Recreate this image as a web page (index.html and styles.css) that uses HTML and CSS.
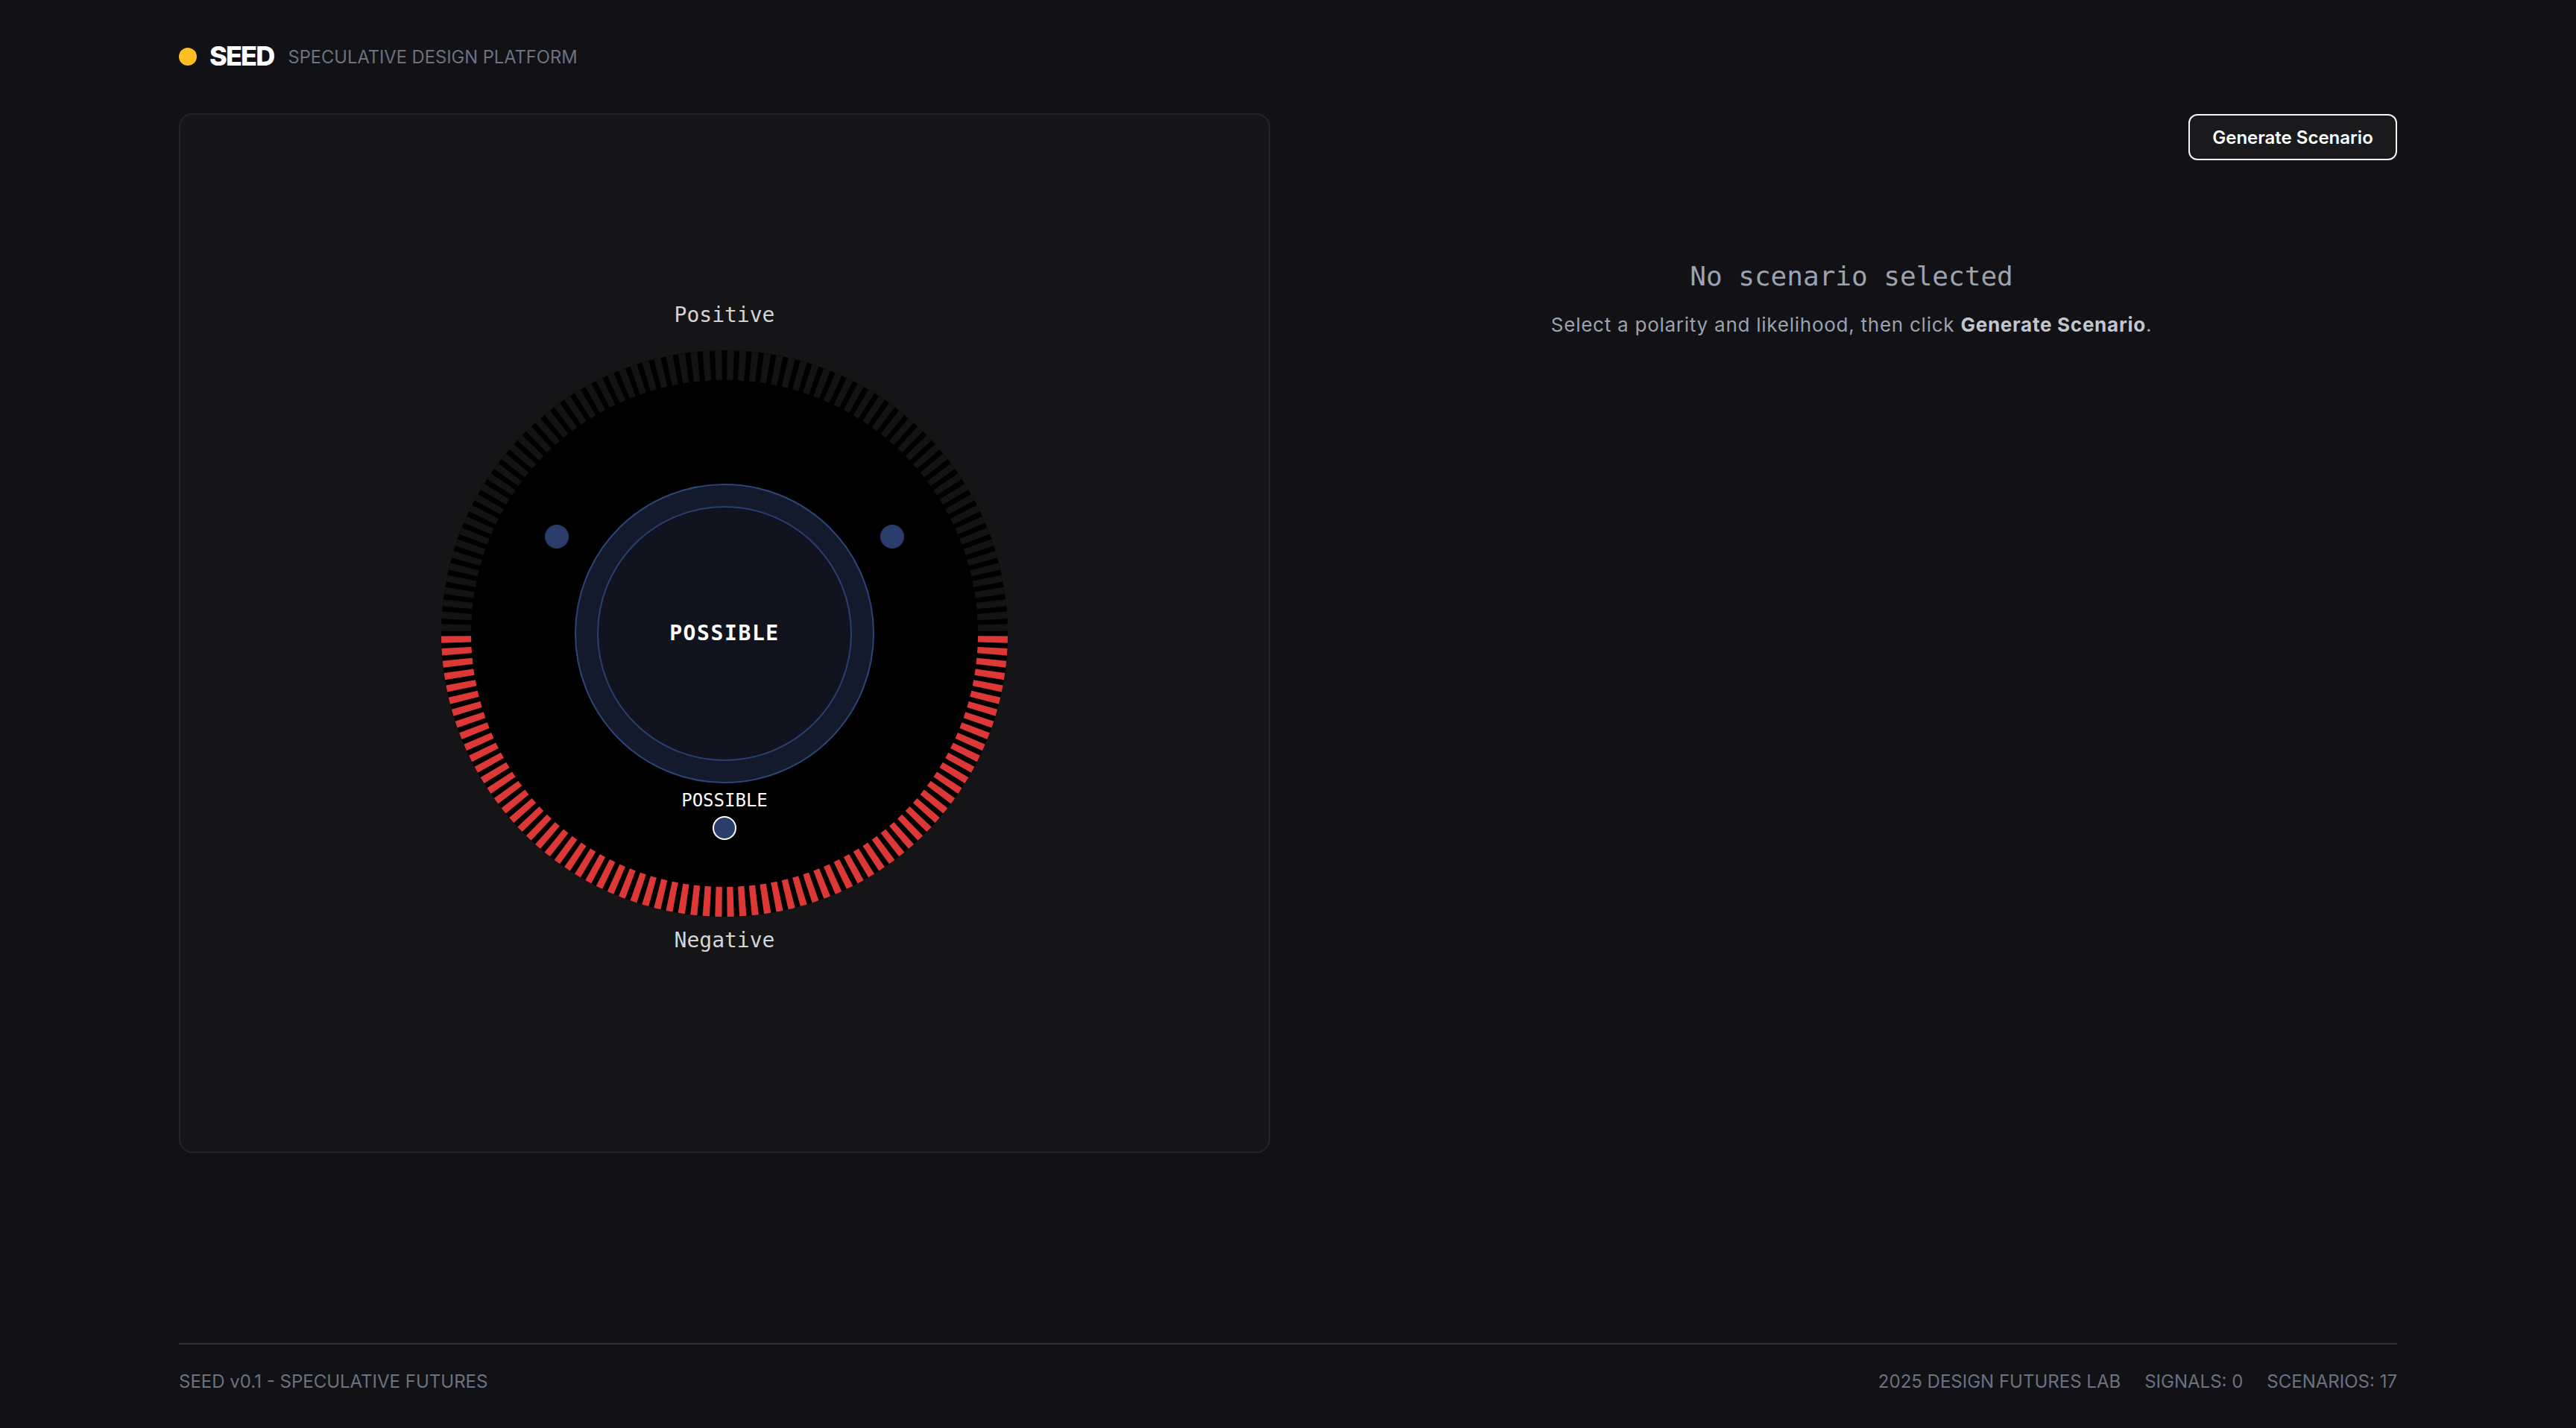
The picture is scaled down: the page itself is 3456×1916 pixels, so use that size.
FILE: index.html
```html
<!DOCTYPE html>
<html lang="en">
<head>
<meta charset="utf-8">
<title>SEED - Speculative Design Platform</title>
<link rel="stylesheet" href="styles.css">
</head>
<body>
<div class="page">
  <header class="header">
    <span class="logo-dot"></span>
    <span class="logo-text">SEED</span>
    <span class="logo-sub">SPECULATIVE DESIGN PLATFORM</span>
  </header>

  <main class="main">
    <section class="panel">
      <svg class="dial" width="800" height="900" viewBox="0 0 800 900" xmlns="http://www.w3.org/2000/svg">
        <text class="axis-label" x="400" y="32" text-anchor="middle">Positive</text>
        <circle cx="400" cy="450" r="380" fill="#000000"/>
        <path class="ticks ticks-top" d="M 40 450 A 360 360 0 0 1 760 450" pathLength="72"/>
        <path class="ticks ticks-bottom" d="M 760 450 A 360 360 0 0 1 40 450" pathLength="72"/>
        <circle cx="175" cy="320" r="16" fill="#2b3d6b"/>
        <circle cx="625" cy="320" r="16" fill="#2b3d6b"/>
        <circle cx="400" cy="450" r="200" fill="#131a2b" stroke="#2c4478" stroke-width="2"/>
        <circle cx="400" cy="450" r="170" fill="#11141f" stroke="#2a3f6f" stroke-width="2"/>
        <text class="center-label" x="400" y="459" text-anchor="middle">POSSIBLE</text>
        <text class="marker-label" x="400" y="682" text-anchor="middle">POSSIBLE</text>
        <circle cx="400" cy="711" r="15" fill="#2b3d6b" stroke="#ffffff" stroke-width="2"/>
        <text class="axis-label" x="400" y="871" text-anchor="middle">Negative</text>
      </svg>
    </section>

    <section class="detail">
      <div class="actions">
        <button class="btn" type="button">Generate Scenario</button>
      </div>
      <div class="empty">
        <h2 class="empty-title">No scenario selected</h2>
        <p class="empty-text">Select a polarity and likelihood, then click <strong>Generate Scenario</strong>.</p>
      </div>
    </section>
  </main>

  <footer class="footer">
    <span class="footer-left">SEED v0.1 - SPECULATIVE FUTURES</span>
    <div class="footer-right">
      <span>2025 DESIGN FUTURES LAB</span>
      <span>SIGNALS: 0</span>
      <span>SCENARIOS: 17</span>
    </div>
  </footer>
</div>
</body>
</html>
```

FILE: styles.css
```css
* { box-sizing: border-box; }

html, body {
  margin: 0;
  padding: 0;
  background: #111116;
}

body {
  font-family: Inter, "Liberation Sans", sans-serif;
  color: #ffffff;
}

.page {
  width: 2976px;
  margin: 0 auto;
}

/* Header */
.header {
  display: flex;
  align-items: center;
  height: 40px;
  margin-top: 55px;
}

.logo-dot {
  width: 24px;
  height: 24px;
  border-radius: 50%;
  background: #fbbf24;
  margin-right: 17px;
  margin-top: 2px;
}

.logo-text {
  font-size: 36px;
  line-height: 40px;
  font-weight: 800;
  letter-spacing: -0.05em;
  color: #ffffff;
  margin-right: 19px;
}

.logo-sub {
  font-size: 23.7px;
  line-height: 32px;
  color: #6b7280;
  margin-top: 3px;
}

/* Main */
.main {
  display: grid;
  grid-template-columns: 1fr 1fr;
  column-gap: 48px;
  margin-top: 57px;
}

.panel {
  height: 1395px;
  background: #151517;
  border: 2px solid #232326;
  border-radius: 18px;
  display: flex;
  align-items: center;
  justify-content: center;
}

.dial { display: block; }

.axis-label {
  font-family: "DejaVu Sans Mono", monospace;
  font-size: 28px;
  fill: #d4d4d8;
}

.ticks {
  fill: none;
  stroke-width: 40;
  stroke-dasharray: 0.56 0.44;
  stroke-dashoffset: 0.78;
}

.ticks-top { stroke: #131313; }
.ticks-bottom { stroke: #dc3838; }

.center-label {
  font-family: "DejaVu Sans Mono", monospace;
  font-size: 28px;
  font-weight: 700;
  letter-spacing: 1.6px;
  fill: #ffffff;
}

.marker-label {
  font-family: "DejaVu Sans Mono", monospace;
  font-size: 24px;
  fill: #ffffff;
}

/* Detail column */
.detail {
  display: flex;
  flex-direction: column;
}

.actions {
  display: flex;
  justify-content: flex-end;
}

.btn {
  width: 280px;
  height: 62px;
  margin-top: 1px;
  background: #1a1a1d;
  border: 2px solid #f4f4f5;
  border-radius: 12px;
  color: #ffffff;
  font-family: Inter, "Liberation Sans", sans-serif;
  font-size: 24px;
  font-weight: 600;
  padding: 0;
}

.empty {
  text-align: center;
  margin-top: 134px;
}

.empty-title {
  margin: 0;
  font-family: "DejaVu Sans Mono", monospace;
  font-size: 36px;
  line-height: 43px;
  font-weight: 400;
  color: #9ca3af;
}

.empty-text {
  margin: 26px 0 0;
  font-size: 26px;
  line-height: 36px;
  letter-spacing: 0.75px;
  color: #9ca3af;
}

.empty-text strong {
  font-weight: 700;
  color: #c2c6cd;
}

/* Footer */
.footer {
  margin-top: 255px;
  border-top: 2px solid #2b313c;
  padding-top: 32px;
  padding-bottom: 44px;
  display: flex;
  justify-content: space-between;
  font-size: 24px;
  line-height: 36px;
  color: #6b7280;
}

.footer-right {
  display: flex;
  gap: 32px;
}
```
